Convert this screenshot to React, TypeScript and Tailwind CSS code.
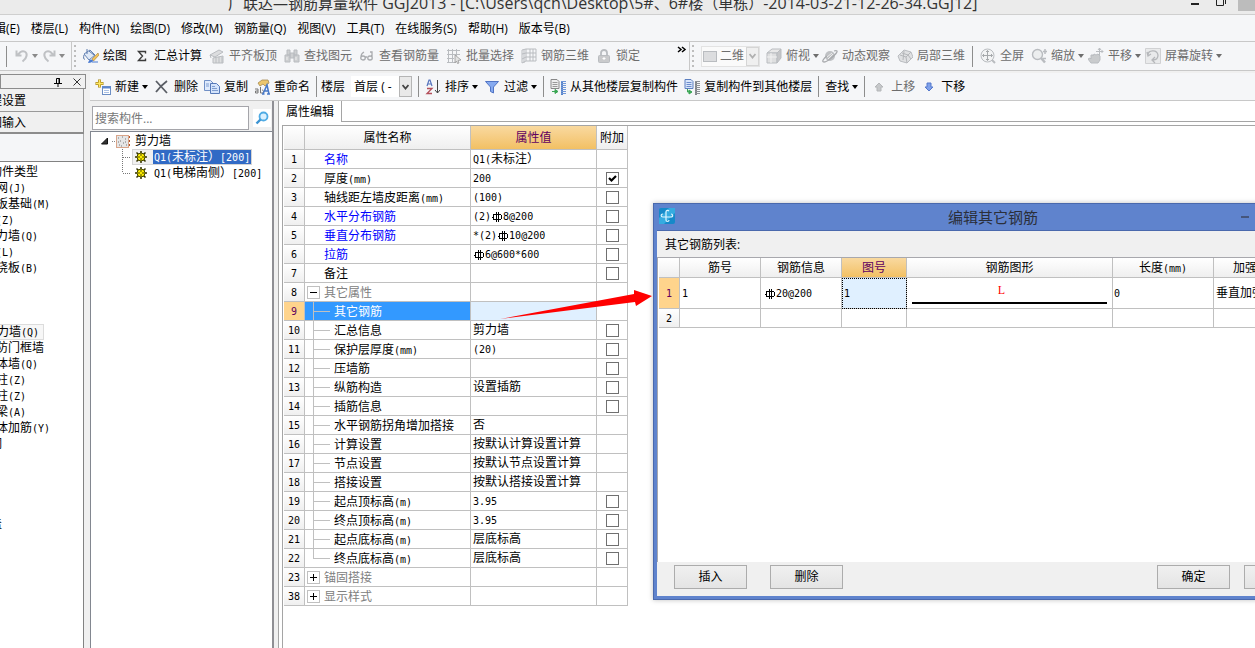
import React from "react";

const Sim = ({ text }: { text: string }) => (
  <>
    {text.split(/([\x20-\x7e]+|⌽)/).map((part, i) => {
      if (part === "⌽") return <Rebar key={i} />;
      if (/^[\x20-\x7e]+$/.test(part)) {
        return (
          <span key={i} className="font-['DejaVu_Sans_Mono',monospace] text-[10px] leading-none">
            {part}
          </span>
        );
      }
      return part;
    })}
  </>
);

const Rebar = () => (
  <svg width="12" height="12" viewBox="0 0 12 12" className="inline-block align-[-3px]" fill="none" stroke="currentColor" role="img" aria-label="HRB400">
    <path d="M2.500 3v5M5.500 1v10M7.500 1v10M10.500 4v4M2 3.500h8M2 8.500h8M1 6.500h2" />
  </svg>
);

const Svg = ({ children, w = 16 }: { children: React.ReactNode; w?: number }) => (
  <svg width={w} height="16" viewBox={`0 0 ${w} 16`} className="shrink-0" fill="none" aria-hidden="true">
    {children}
  </svg>
);

const g = "#b9bcc0";

const icons: Record<string, React.ReactNode> = {
  undo: <path d="M1.500 2.500v5h5M2.500 7l3-3c3-2 7 0 6 4-.5 3-2 4-4 5.500" stroke="#bfc1c4" strokeWidth="2" />,
  redo: <path d="M12.500 2.500v5h-5M11.500 7l-3-3c-3-2-7 0-6 4 .5 3 2 4 4 5.500" stroke="#bfc1c4" strokeWidth="2" />,
  draw: (
    <>
      <path d="M1 6l6-4 5 5-6 5z" fill="#dfe9f7" stroke="#6684b4" />
      <path d="M4 1v5M1 7c-1 3 0 5 1 4M6 3l5 4" stroke="#5a78ac" />
      <path d="M15 5l-6 6 1.500 2L16 7z" fill="#f1c25a" stroke="#a5803c" strokeWidth=".6" />
      <path d="M5 15c1-4 3-4 5-3 0 2-2 3-5 3z" fill="#4a7ad0" />
      <path d="M9 14h6" stroke="#4a7ad0" />
    </>
  ),
  sigma: <path d="M11.500 5.500V3.500H4.500l4 4.500-4 4.500h7v-2" stroke="#3c3c3c" strokeWidth="1.400" />,
  slab: (
    <>
      <path d="M1 7l9-5 4 2-8 5zM1 7l1 3" fill="#dcdddf" stroke={g} />
      <path d="M4 15V10l10-2v7zM7 10v5M10 9v6M13 9v6" fill="#dedfe0" stroke={g} />
    </>
  ),
  find: (
    <>
      <path d="M3 2h3v5H3zM10 2h3v5h-3zM1 7h5v7H1zM10 7h5v7h-5zM6 5h4v5H6z" fill="#cdcfd1" stroke={g} />
      <path d="M3 9v3M12 9v3" stroke="#eee" />
    </>
  ),
  glasses: <path d="M4 12c-3 0-3-4 0-4s3 4 0 4zM11 12c-3 0-3-4 0-4s3 4 0 4zM6 9h2M2 9c0-3 1-4 3-5M13 9V4h-2" stroke="#a9abae" strokeWidth="1.300" />,
  batch: (
    <>
      <path d="M2.500 1v14M6.500 1v14M10.500 1v7M1 2.500h13M1 6.500h13M1 10.500h7M1 14.500h8" stroke={g} />
      <path d="M9 7l6 5-3 .5 1 2.500-1.500.5-1-2.500L9 15z" fill="#e3e3e3" stroke="#999" strokeWidth=".8" />
    </>
  ),
  mesh: <path d="M1 2l4-1v12l-4 2zM5 1h10v12H5M1 6l4-1h10M1 11l4-2h10M9 1v12M12 1v12M3 2v13" stroke={g} />,
  lock: (
    <>
      <path d="M5 7V5c0-4 6-4 6 0v2" stroke={g} strokeWidth="1.800" />
      <rect x="2.500" y="7.500" width="11" height="7" rx="1" fill="#c9cacc" stroke={g} />
      <path d="M8 9v3M6.500 10.500h3" stroke="#fff" />
    </>
  ),
  flat: <rect x="1.500" y="3.500" width="13" height="10" fill="#dcdddf" stroke={g} />,
  cube: (
    <>
      <path d="M1 5l5-4h9l-4 4z" fill="#e8e8e8" stroke={g} />
      <path d="M1 5h10v10H1z" fill="#dedfe0" stroke={g} />
      <path d="M11 5l4-4v9l-4 5z" fill="#c5c6c8" stroke={g} />
      <path d="M5 5v10M1 9h10" stroke="#f2f2f2" />
    </>
  ),
  orbit: (
    <>
      <circle cx="8" cy="8" r="5" fill="#bfc1c4" />
      <path d="M12 3c3-1 4 0 2 2.500S5 14 2 14s0-4 3-6" stroke="#a8aaad" strokeWidth="1.300" />
      <path d="M5 9l5-4M6 11l5-5" stroke="#ececec" />
    </>
  ),
  local: (
    <>
      <path d="M1 8l6-6 7 2 2 5-6 6-7-2z" fill="#dfe0e2" stroke={g} />
      <path d="M3 7l6 2 5-5M9 9l1 6M5 5l6 2 3 4M7 3l-1 9" stroke="#b5b7ba" />
    </>
  ),
  full: (
    <>
      <circle cx="7.500" cy="7.500" r="6.500" fill="#f2f3f4" stroke={g} />
      <path d="M7.500 2.500v10M2.500 7.500h10M6 4l1.500-1.500L9 4M6 11l1.500 1.500L9 11M4 6L2.500 7.500 4 9M11 6l1.500 1.500L11 9" stroke="#a5a8ab" />
      <path d="M12 12l3 3" stroke={g} strokeWidth="2" />
    </>
  ),
  zoom: (
    <>
      <circle cx="6.500" cy="6.500" r="5" fill="#eceeef" stroke={g} strokeWidth="1.400" />
      <path d="M10 10l4 4.500" stroke={g} strokeWidth="2.500" />
      <path d="M14 1v5M12 3.500h4M12 10.500h3" stroke={g} strokeWidth="1.500" />
    </>
  ),
  pan: (
    <>
      <path d="M3 15l-3-4 2-1 1 1V7h2v1l1-2 2 1 2-1 2 2v4l-2 3z" fill="#c9cbcd" stroke={g} />
      <path d="M11.500 0v8M8 3.500h7M10 2l1.500-2L13 2M13.500 2L15 3.500 13.500 5" stroke={g} />
    </>
  ),
  rotate: (
    <>
      <path d="M.5.5h15v15H.5z" fill="#e9eaeb" stroke="#d0d1d3" />
      <path d="M3 7C3 2 12 1 13 7c0 3-2 5-5 5M2 4l1 4 3-2M10 9l-3 3 3 3" stroke="#b5b7ba" strokeWidth="1.300" />
    </>
  ),
  add: (
    <>
      <path d="M4.500.5v8M.5 4.500h8" stroke="#a98a1c" strokeWidth="3" />
      <path d="M4.500 1v7M1 4.500h7" stroke="#ffe766" strokeWidth="1.500" />
      <rect x="7.500" y="7.500" width="8" height="8" fill="#fff" stroke="#6c8ec4" />
      <path d="M7 8.500h9" stroke="#5b86cf" strokeWidth="2" />
      <path d="M9 11.500h5M9 13.500h5" stroke="#aac0e4" />
    </>
  ),
  cross: <path d="M2 2l11 12M13 2C9 5 5 9 2 13" stroke="#5a5e65" strokeWidth="1.800" />,
  copy: (
    <>
      <path d="M.5 1.500h6l3 3v7h-9z" fill="#dfeafc" stroke="#7190c6" />
      <path d="M6.500 4.500h6l3 3v7h-9z" fill="#d3e3fb" stroke="#5679b8" />
      <path d="M2 5h3M2 7h3M8 9.500h5M8 11.500h6M8 7.500h3" stroke="#7f9dcf" />
    </>
  ),
  rename: (
    <>
      <path d="M4 4l4-3h6l1 3-4 3-2-2-3 2z" fill="#ecc66d" stroke="#a78c52" strokeWidth=".8" />
      <path d="M1 10h3v4H1.500v-2H4M6.500 8v6H8c2 0 2-3 0-3" stroke="#777" />
      <path d="M9 15l4-9 2 9M10.500 12h4M8 15h2.500M13 15h3" stroke="#4879c8" strokeWidth="1.500" />
    </>
  ),
  sort: (
    <>
      <path d="M2 7l2-6h1l2 6M3 5h3" stroke="#5573bd" strokeWidth="1.200" />
      <path d="M2 9.500h5L2 14.500h5" stroke="#b34f5b" strokeWidth="1.300" />
      <path d="M12.500 1v13M10 11l2.500 3 2.500-3" stroke="#444" />
    </>
  ),
  filter: <path d="M1.500 2.500h13L9.500 8v6l-3-1.500V8z" fill="#86aaf0" stroke="#5174c4" />,
  copyFrom: (
    <>
      <path d="M1 .5h6l2 2v7H1z" fill="#eee" stroke="#888" />
      <path d="M2.500 3.500h5M2.500 5.500h5M2.500 7.500h5" stroke="#999" />
      <path d="M2 12.500h3M5 10.500l3 2-3 2z" fill="#3aa655" stroke="#3aa655" />
      <path d="M12 2v14" stroke="#5681c8" strokeWidth="2" />
      <path d="M16 2.500h-5M16 4.500h-5M16 6.500h-5M16 8.500h-5M16 10.500h-5M16 12.500h-5M16 14.500h-5" stroke="#6f97d8" />
    </>
  ),
  copyTo: (
    <>
      <path d="M1 .5h6l2 2v7H1z" fill="#d9e6fb" stroke="#5c7fc0" />
      <path d="M2.500 3.500h5M2.500 5.500h5M2.500 7.500h5" stroke="#6c8ccc" />
      <path d="M3.500 10v3H5M5 11l3 2-3 2z" fill="#3aa655" stroke="#3aa655" />
      <path d="M12 2v14" stroke="#808488" strokeWidth="2" />
      <path d="M16 2.500h-5M16 4.500h-5M16 6.500h-5M16 8.500h-5M16 10.500h-5M16 12.500h-5M16 14.500h-5" stroke="#8d9196" />
    </>
  ),
  up: <path d="M8 4l4 4H10v4H6V8H4z" fill="#c6c8ca" stroke="#b4b6b8" />,
  down: <path d="M8 12l4-4H10V4H6v4H4z" fill="#7fa1ea" stroke="#5578cc" />,
};

const Caret = () => (
  <svg width="6" height="4" viewBox="0 0 6 4" className="-ml-px shrink-0" fill="currentColor" aria-hidden="true">
    <path d="M0 0h6L3 4z" />
  </svg>
);

type ToolProps = { icon?: string; label: string; off?: boolean; caret?: boolean };

const Tool = ({ icon, label, off, caret }: ToolProps) => (
  <button disabled={off} className={`flex shrink-0 items-center gap-1 whitespace-nowrap ${off ? "text-[#6d6d6d]" : "text-black"}`}>
    {icon && <Svg>{icons[icon]}</Svg>}
    <span>{label}</span>
    {caret && <Caret />}
  </button>
);

const Sep = () => <span className="h-[21px] w-px shrink-0 bg-[#8d8d8d]" />;

const Grip = () => (
  <span className="flex shrink-0 flex-col gap-[3px]">
    {[0, 1, 2, 3, 4].map((i) => (
      <i key={i} className="size-[2px] bg-[#bdbdbd]" />
    ))}
  </span>
);

const DropArrow = ({ off }: { off?: boolean }) => (
  <span className={`pointer-events-none absolute right-0 top-0 flex h-full w-[13px] items-center justify-center border ${off ? "border-[#d5d5d5] bg-[#efefef]" : "border-[#b5b5b5] bg-[#e9e9e9]"}`}>
    <svg width="7" height="6" viewBox="0 0 7 6" fill="none" stroke={off ? "#b0b0b0" : "#444"} strokeWidth="1.800">
      <path d="M.5 1l3 3.500 3-3.500" />
    </svg>
  </span>
);

const menus = ["编辑(E)", "楼层(L)", "构件(N)", "绘图(D)", "修改(M)", "钢筋量(Q)", "视图(V)", "工具(T)", "在线服务(S)", "帮助(H)", "版本号(B)"];

const TitleBar = () => (
  <header className="flex h-[15px] shrink-0 items-end border-b border-[#cfcfcf] bg-[#ebebeb]">
    <h1 className="ml-[228px] grow whitespace-nowrap text-[15px] leading-[21px] text-[#333]">
      广联达—钢筋算量软件<span className="text-[16px]"> GGJ2013 - [C:\Users\qch\Desktop\5#</span>、<span className="text-[16px]">6#</span>楼（单栋）
      <span className="text-[16px]">-2014-03-21-12-26-34.GGJ12]</span>
    </h1>
    <div className="flex h-full items-start gap-[11px]">
      <button aria-label="最小化" className="flex h-[5px] w-[24px] items-end justify-end">
        <i className="h-[2px] w-2 bg-[#222]" />
      </button>
      <button aria-label="还原" className="w-[19px] pl-1.5">
        <svg width="11" height="7" viewBox="0 0 11 7" fill="none" stroke="#222">
          <path d="M.5 0v5.500h7V0M9.500 0v4" />
        </svg>
      </button>
      <button aria-label="关闭" className="-ml-0.5 h-[11px] w-[17px] bg-[#bcbcbc]" />
    </div>
  </header>
);

const ToolbarTop = () => (
  <div className="flex h-[29px] shrink-0 items-center border-b border-[#c8c8c8] bg-[#f5f6f8] text-[#8a8a8a]">
    <div className="flex h-full w-[72px] shrink-0 items-center gap-1 border-r border-[#c8c8c8] pl-1.5">
      <Sep />
      <button aria-label="撤销" className="ml-1 flex items-center gap-1">
        <Svg w={14}>{icons.undo}</Svg>
        <Caret />
      </button>
      <button aria-label="恢复" className="flex items-center gap-1">
        <Svg w={14}>{icons.redo}</Svg>
        <Caret />
      </button>
    </div>
    <div className="flex h-full w-[618px] shrink-0 items-center gap-[7px] border-r border-[#c8c8c8] pl-0.5">
      <Grip />
      <Tool icon="draw" label="绘图" />
      <Tool icon="sigma" label="汇总计算" />
      <Tool icon="slab" label="平齐板顶" off />
      <Tool icon="find" label="查找图元" off />
      <Tool icon="glasses" label="查看钢筋量" off />
      <Tool icon="batch" label="批量选择" off />
      <Tool icon="mesh" label="钢筋三维" off />
      <Tool icon="lock" label="锁定" off />
      <button aria-label="更多" className="ml-auto mr-0.5 self-start text-black">
        <svg width="10" height="16" viewBox="0 0 10 16" fill="none" stroke="currentColor" strokeWidth="1.500">
          <path d="M1 5l3 2.500L1 10M5 5l3 2.500L5 10" />
        </svg>
      </button>
    </div>
    <div className="flex items-center gap-[7px] pl-0.5">
      <Grip />
      <div className="relative flex h-[21px] w-[59px] items-center border border-[#e3e3e3] bg-[#fafafa]">
        <Svg>{icons.flat}</Svg>
        <select disabled aria-label="显示模式" className="h-full w-[40px] appearance-none pl-0.5 text-[#6d6d6d]">
          <option>二维</option>
        </select>
        <DropArrow off />
      </div>
      <span className="-ml-px flex items-center gap-[3px]">
        <Tool icon="cube" label="俯视" off caret />
        <Tool icon="orbit" label="动态观察" off />
      </span>
      <Tool icon="local" label="局部三维" off />
      <Sep />
      <Tool icon="full" label="全屏" off />
      <span className="flex items-center gap-1">
        <Tool icon="zoom" label="缩放" off caret />
        <Tool icon="pan" label="平移" off caret />
        <Tool icon="rotate" label="屏幕旋转" off caret />
      </span>
    </div>
  </div>
);

const ToolbarSub = () => (
  <div className="flex h-[28px] shrink-0 items-center gap-1.5 border-b border-[#c8c8c8] bg-[#f5f6f8] pl-[5px]">
    <Tool icon="add" label="新建" caret />
    <Tool icon="cross" label="删除" />
    <Tool icon="copy" label="复制" />
    <Tool icon="rename" label="重命名" />
    <Sep />
    <label htmlFor="floor" className="-ml-0.5 whitespace-nowrap">
      楼层
    </label>
    <div className="relative h-[21px] w-[61px] bg-white">
      <select id="floor" className="h-full w-full appearance-none whitespace-nowrap pl-[3px]">
        <option>首层 ( -</option>
      </select>
      <DropArrow />
    </div>
    <Sep />
    <Tool icon="sort" label="排序" caret />
    <Tool icon="filter" label="过滤" caret />
    <Sep />
    <Tool icon="copyFrom" label="从其他楼层复制构件" />
    <Tool icon="copyTo" label="复制构件到其他楼层" />
    <Sep />
    <Tool label="查找" caret />
    <Sep />
    <Tool icon="up" label="上移" off />
    <Tool icon="down" label="下移" />
  </div>
);

const types = ["轴网(J)", "筏板基础(M)", "柱(Z)", "剪力墙(Q)", "梁(L)", "现浇板(B)", "", "", "", "剪力墙(Q)", "人防门框墙", "砌体墙(Q)", "暗柱(Z)", "端柱(Z)", "暗梁(A)", "砌体加筋(Y)"];

const ModulePanel = () => (
  <aside className="flex w-[86px] shrink-0 flex-col overflow-hidden bg-[#f0f0f0] pt-px">
    <div className="flex h-[15px] shrink-0 items-center justify-end gap-[11px] border border-[#8c8c8c] pr-1">
      <button aria-label="固定">
        <svg width="8" height="10" viewBox="0 0 8 10" fill="none" stroke="#000">
          <path d="M2.500 6V1.500h3V6M5 1v5M0 6.500h8M4 7v3" />
        </svg>
      </button>
      <button aria-label="关闭面板">
        <svg width="8" height="8" viewBox="0 0 8 8" fill="none" stroke="#333">
          <path d="M.5.5l7 7M7.500.5l-7 7" />
        </svg>
      </button>
    </div>
    <button className="h-[23px] w-[84px] shrink-0 border-b border-r border-[#999] pt-0.5 text-left">
      <span className="-ml-[22px]">工程设置</span>
    </button>
    <button className="h-[22px] w-[84px] shrink-0 border-b-2 border-r border-[#8c8c8c] pt-0.5 text-left">
      <span className="-ml-[22px]">绘图输入</span>
    </button>
    <div className="h-[27px] w-[84px] shrink-0 border-r border-[#aaa] bg-[#f5f6f8]" />
    <ul className="w-[84px] grow whitespace-nowrap border-r border-t border-[#828282] bg-white pt-0.5 leading-4">
      <li className="-ml-[34px]">常用构件类型</li>
      {types.map((t, i) => (
        <li key={i} className="-ml-4 h-4">
          {i === 9 ? (
            <span className="inline-block h-4 border border-[#dcdcdc] bg-[#f7f7f7] pr-1 leading-[14px]">
              <Sim text={t} />
            </span>
          ) : (
            <Sim text={t} />
          )}
        </li>
      ))}
      <li className="-ml-[34px]">门窗洞</li>
      <li className="-ml-[34px] mt-16">空心盖</li>
    </ul>
  </aside>
);

const Gear = () => (
  <svg width="12" height="12" viewBox="0 0 12 12" className="shrink-0" fill="none" aria-hidden="true">
    <path d="M6 0v12M0 6h12M1.500 1.500l9 9M10.500 1.500l-9 9" stroke="#333300" strokeWidth="1.500" />
    <circle cx="6" cy="6" r="4" fill="#ffee00" stroke="#444400" />
    <path d="M6 3v6M3 6h6" stroke="#444400" />
    <circle cx="6" cy="6" r="1.200" fill="#ffee00" />
  </svg>
);

const TreePanel = () => (
  <section className="mr-1 flex w-[184px] shrink-0 flex-col border-r-2 border-[#8f8f94]">
    <div className="flex h-[30px] shrink-0 items-center gap-1 bg-[#f0f0f0] pl-0.5 pt-1">
      <input aria-label="搜索构件" placeholder="搜索构件..." className="h-[24px] w-[157px] border border-[#a5a5aa] bg-white px-0.5 placeholder:text-[#777]" />
      <button aria-label="搜索" className="flex size-[18px] items-center justify-center bg-white">
        <svg width="14" height="14" viewBox="0 0 14 14" fill="none">
          <circle cx="8.500" cy="5.500" r="4" fill="#d9f0ff" stroke="#4fabe4" strokeWidth="1.800" />
          <path d="M5.500 8.500L1.500 12.500" stroke="#3b93d2" strokeWidth="2.400" />
        </svg>
      </button>
    </div>
    <div className="grow border-l border-t border-[#828790] bg-white pl-2.5 pt-px leading-4">
      <div className="flex h-4 items-center">
        <svg width="31" height="16" viewBox="0 0 31 16" className="shrink-0" aria-hidden="true">
          <path d="M6.500 5v6H.5z" fill="#333" stroke="#111" />
          <path d="M11 8.500h4" stroke="#888" strokeDasharray="1 1" />
          <rect x="15.500" y="2.500" width="12" height="12" fill="#e6e6e6" stroke="#d9a58a" />
          <path d="M17 5h1M21 4h1M24 6h1M19 8h1M22 10h1M18 12h1M25 12h1M20 13h1M24 9h1M17 9h1" stroke="#777" />
          <path d="M28.500 3v11" stroke="#b5562a" strokeDasharray="2 2" />
        </svg>
        <span className="pl-[3px]">剪力墙</span>
      </div>
      {["Q1(未标注）[200]", "Q1(电梯南侧）[200]"].map((name, i) => (
        <div key={name} className="flex h-4 items-center">
          <svg width="31" height="16" viewBox="0 0 31 16" className="shrink-0" fill="none" stroke="#777" strokeDasharray="1 1" aria-hidden="true">
            <path d={i === 0 ? "M21.500 0v16M22 8.500h8" : "M21.500 0v8M22 8.500h8"} />
          </svg>
          <div className={`flex h-4 items-center gap-1.5 whitespace-nowrap pl-[3px] ${i === 0 ? "bg-[#f0f0f0] pr-px outline-1 -outline-offset-1 outline-[#d4d4d4]" : ""}`}>
            <Gear />
            <span className={i === 0 ? "h-4 bg-[#316ac5] px-px text-white" : "px-px"}>
              <Sim text={name} />
            </span>
          </div>
        </div>
      ))}
    </div>
  </section>
);

type Row = { n: number; name: string; value?: string; box?: boolean; on?: boolean; kind?: "key" | "group" | "child"; open?: boolean };

const rows: Row[] = [
  { n: 1, name: "名称", value: "Q1(未标注）", kind: "key" },
  { n: 2, name: "厚度(mm)", value: "200", box: true, on: true },
  { n: 3, name: "轴线距左墙皮距离(mm)", value: "(100)", box: true },
  { n: 4, name: "水平分布钢筋", value: "(2)⌽8@200", box: true, kind: "key" },
  { n: 5, name: "垂直分布钢筋", value: "*(2)⌽10@200", box: true, kind: "key" },
  { n: 6, name: "拉筋", value: "⌽6@600*600", box: true, kind: "key" },
  { n: 7, name: "备注", box: true },
  { n: 8, name: "其它属性", kind: "group", open: true },
  { n: 9, name: "其它钢筋", kind: "child" },
  { n: 10, name: "汇总信息", value: "剪力墙", box: true, kind: "child" },
  { n: 11, name: "保护层厚度(mm)", value: "(20)", box: true, kind: "child" },
  { n: 12, name: "压墙筋", box: true, kind: "child" },
  { n: 13, name: "纵筋构造", value: "设置插筋", box: true, kind: "child" },
  { n: 14, name: "插筋信息", box: true, kind: "child" },
  { n: 15, name: "水平钢筋拐角增加搭接", value: "否", kind: "child" },
  { n: 16, name: "计算设置", value: "按默认计算设置计算", kind: "child" },
  { n: 17, name: "节点设置", value: "按默认节点设置计算", kind: "child" },
  { n: 18, name: "搭接设置", value: "按默认搭接设置计算", kind: "child" },
  { n: 19, name: "起点顶标高(m)", value: "3.95", box: true, kind: "child" },
  { n: 20, name: "终点顶标高(m)", value: "3.95", box: true, kind: "child" },
  { n: 21, name: "起点底标高(m)", value: "层底标高", box: true, kind: "child" },
  { n: 22, name: "终点底标高(m)", value: "层底标高", box: true, kind: "child" },
  { n: 23, name: "锚固搭接", kind: "group" },
  { n: 38, name: "显示样式", kind: "group" },
];

const NameCell = ({ row }: { row: Row }) => {
  if (row.kind === "group") {
    return (
      <div className="flex h-[18px] items-center gap-1 pl-0.5 text-[#808080]">
        <button aria-label={row.open ? "折叠" : "展开"} className="size-[13px] border border-[#c0c0c0] bg-white text-black">
          <svg width="11" height="11" viewBox="0 0 11 11" stroke="currentColor">
            <path d={row.open ? "M2 5.500h7" : "M2 5.500h7M5.500 2v7"} />
          </svg>
        </button>
        <span className="pt-0.5">{row.name}</span>
      </div>
    );
  }
  if (row.kind === "child") {
    return (
      <div className="flex h-[18px] items-center">
        <svg width="29" height="18" viewBox="0 0 29 18" className="shrink-0 overflow-visible" stroke="#c0c0c0" aria-hidden="true">
          <path d={row.n === 22 ? "M8.500 0v9M8 9.500h17" : "M8.500 0v19M8 9.500h17"} />
        </svg>
        <span className="pt-0.5">
          <Sim text={row.name} />
        </span>
      </div>
    );
  }
  return (
    <div className={`flex h-[18px] items-center pl-[19px] ${row.kind === "key" ? "text-[#0000ff]" : ""}`}>
      <span className="pt-0.5">
        <Sim text={row.name} />
      </span>
    </div>
  );
};

const cell = "border-b border-r border-[#c0c0c0] p-0";
const head = "border-b border-r border-[#c0c0c0] bg-linear-to-b from-white to-[#efefef] p-0 font-normal";
const headOn = "border-b border-r border-[#c0c0c0] bg-linear-to-b from-[#f9d99f] to-[#f2c063] p-0 font-normal text-[#600060]";

const PropertyTable = () => (
  <table className="w-[344px] table-fixed border-separate border-spacing-0 whitespace-nowrap leading-[18px]">
    <colgroup>
      <col className="w-[21px]" />
      <col className="w-[166px]" />
      <col className="w-[126px]" />
      <col className="w-[31px]" />
    </colgroup>
    <thead>
      <tr className="h-[24px]">
        <th className={head} />
        <th className={head}>属性名称</th>
        <th className={headOn}>属性值</th>
        <th className={head}>附加</th>
      </tr>
    </thead>
    <tbody>
      {rows.map((row) => {
        const on = row.n === 9;
        return (
          <tr key={row.n} className="h-[19px]">
            <th className={on ? "border-b border-r border-[#c0c0c0] bg-[#ffd48c] p-0 font-normal text-[#600060]" : head}>
              <div className="h-[18px]">
                <Sim text={String(row.n)} />
              </div>
            </th>
            <td className={`${cell} ${on ? "bg-[#3399ff] text-white" : ""}`}>
              <NameCell row={row} />
            </td>
            <td className={`${cell} ${on ? "bg-[#e0f0ff]" : ""}`}>
              <div className="h-[18px] pl-0.5">{row.value && <Sim text={row.value} />}</div>
            </td>
            <td className={cell}>
              {row.box && (
                <label className="relative mx-auto block size-[13px]">
                  <input type="checkbox" defaultChecked={row.on} aria-label={row.name} className="peer block size-[13px] appearance-none border border-[#707070] bg-white" />
                  <svg width="13" height="13" viewBox="0 0 13 13" className="absolute inset-0 hidden peer-checked:block" fill="none" stroke="#000" strokeWidth="2.200">
                    <path d="M3 6l2.500 2.500L10 4" />
                  </svg>
                </label>
              )}
            </td>
          </tr>
        );
      })}
    </tbody>
  </table>
);

const dialogButton = "h-[24px] w-[73px] shrink-0 border border-[#acacac] bg-linear-to-b from-[#f0f0f0] to-[#e4e4e4]";

const RebarDialog = () => (
  <div role="dialog" aria-label="编辑其它钢筋" className="absolute left-[653px] top-[203px] flex h-[397px] w-[680px] flex-col border border-[#4a69ad] bg-[#5f83cd] px-[3px] pb-[3px] shadow-[0_0_5px_rgba(0,0,0,0.25)]">
    <div className="relative flex h-[26px] shrink-0 items-center justify-center">
      <svg width="16" height="16" viewBox="0 0 16 16" className="absolute left-[2px] top-[4px]" fill="none" aria-hidden="true">
        <rect width="16" height="16" rx="2" fill="#1689c9" />
        <path d="M0 10L10 0h6v5L5 16H0z" fill="#35abe0" />
        <path d="M10 3c-1-1-3-1-3 1v8c0 2 3 2 3 0M4 6c-2.500 0-2.500 3 0 3h8c2.500 0 2-3 0-3" stroke="#dcf5ff" strokeWidth="1.200" />
      </svg>
      <h2 className="text-[15px] text-[#2b2f3a]">编辑其它钢筋</h2>
      <button aria-label="最小化对话框" className="absolute right-[80px] top-[12px] h-[2px] w-2 bg-[#45557c]" />
    </div>
    <div className="flex grow flex-col border-t border-[#4a69ad] bg-[#f0f0f0]">
      <p className="h-[26px] shrink-0 pl-2 pt-0.5 leading-[24px]">其它钢筋列表:</p>
      <div className="grow border-l border-t border-[#a8a8ad] bg-white pl-px">
        <table className="w-full table-fixed border-separate border-spacing-0 whitespace-nowrap">
          <colgroup>
            <col className="w-[21px]" />
            <col className="w-[81px]" />
            <col className="w-[81px]" />
            <col className="w-[65px]" />
            <col className="w-[206px]" />
            <col className="w-[101px]" />
            <col />
          </colgroup>
          <thead>
            <tr className="h-[20px] leading-[19px]">
              <th className={head} />
              <th className={head}>筋号</th>
              <th className={head}>钢筋信息</th>
              <th className={headOn}>图号</th>
              <th className={head}>钢筋图形</th>
              <th className={head}>
                <Sim text="长度(mm)" />
              </th>
              <th className={`${head} pl-[19px] text-left`}>加强筋类型</th>
            </tr>
          </thead>
          <tbody>
            <tr className="h-[31px]">
              <th className="border-b border-r border-[#c0c0c0] bg-[#ffd48c] p-0 font-normal text-[#600060]">
                <Sim text="1" />
              </th>
              <td className={`${cell} pl-0.5`}>
                <Sim text="1" />
              </td>
              <td className={`${cell} pl-[3px]`}>
                <Sim text="⌽20@200" />
              </td>
              <td className={`${cell} bg-[#e0f0ff] pl-0.5 outline-1 -outline-offset-1 outline-dotted outline-black`}>
                <Sim text="1" />
              </td>
              <td className={cell}>
                <div className="mx-[5px] border-b-2 border-black pb-1 pr-4 text-center font-['Liberation_Serif',serif] leading-4 text-[#ff0000]">L</div>
              </td>
              <td className={`${cell} pl-px`}>
                <Sim text="0" />
              </td>
              <td className={`${cell} pl-0.5`}>垂直加强筋</td>
            </tr>
            <tr className="h-[19px]">
              <th className={head}>
                <Sim text="2" />
              </th>
              {[0, 1, 2, 3, 4, 5].map((i) => (
                <td key={i} className={cell} />
              ))}
            </tr>
          </tbody>
        </table>
      </div>
      <div className="flex h-[34px] shrink-0 items-start pl-[17px] pr-3 pt-[3px]">
        <button className={dialogButton}>插入</button>
        <button className={`${dialogButton} ml-[23px]`}>删除</button>
        <button className={`${dialogButton} ml-auto`}>确定</button>
        <button className={`${dialogButton} ml-3.5`}>取消</button>
      </div>
    </div>
  </div>
);

const App = () => {
  return (
    <div className="relative flex h-screen flex-col overflow-hidden bg-[#f0f0f0] font-['Open_Sans','Noto_Sans_CJK_SC',sans-serif] text-[12px] leading-4 text-black">
      <TitleBar />
      <nav className="flex h-[27px] shrink-0 items-center border-b border-[#c8c8c8] bg-[#f5f6f8] pt-0.5">
        <div className="-ml-[18px] flex gap-[11px] whitespace-nowrap">
          {menus.map((m) => (
            <button key={m}>{m}</button>
          ))}
        </div>
      </nav>
      <ToolbarTop />
      <div className="flex min-h-0 grow pt-0.5">
        <ModulePanel />
        <div className="ml-1 flex min-w-0 grow flex-col">
          <ToolbarSub />
          <div className="flex min-h-0 grow">
            <TreePanel />
            <main className="flex min-w-0 grow flex-col border-l border-[#a5a5a5] bg-white">
              <div className="flex h-[21px] shrink-0">
                <button className="w-[63px] border-r border-[#a5a5a5]">属性编辑</button>
                <div className="grow border-b border-[#a5a5a5]" />
              </div>
              <div className="ml-[3px] mt-[3px] grow border-l border-t border-[#a5a5a5] pl-px">
                <PropertyTable />
              </div>
            </main>
          </div>
        </div>
      </div>
      <RebarDialog />
      <svg width="154" height="32" viewBox="0 0 154 32" className="pointer-events-none absolute left-[499px] top-[289px]" fill="#ff0000" aria-hidden="true">
        <path d="M1 30L135 5V1l18 6-16 10-1-4z" />
      </svg>
    </div>
  );
};

export default App;
